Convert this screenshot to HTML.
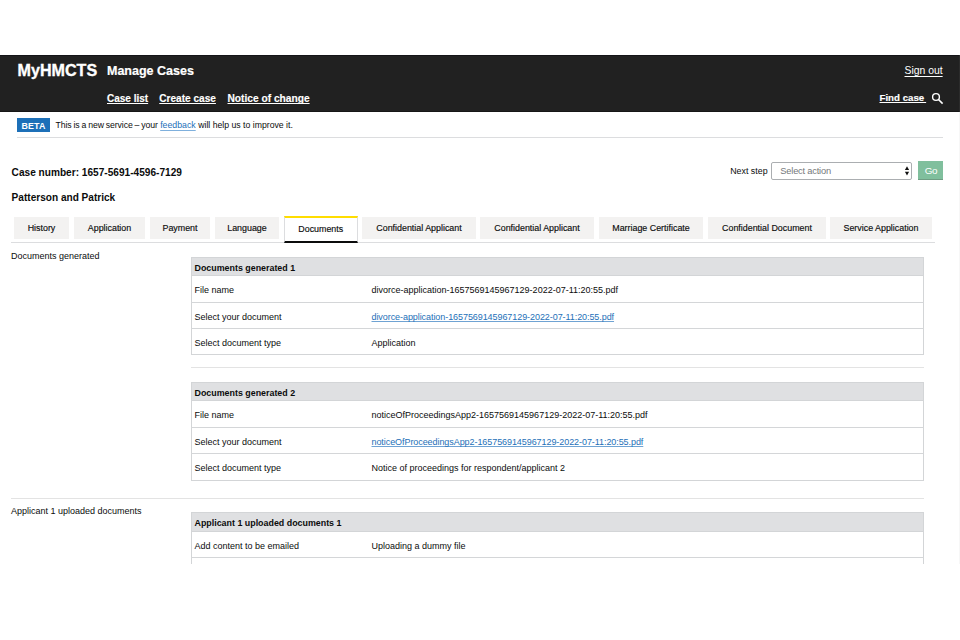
<!DOCTYPE html>
<html><head><meta charset="utf-8"><style>
html,body{margin:0;padding:0;background:#fff;width:960px;height:640px;overflow:hidden;position:relative}
.t{position:absolute;white-space:nowrap;line-height:20px;font-family:"Liberation Sans", sans-serif}
.r{position:absolute}
.tab{text-align:center;color:#0b0c0c}
u{text-decoration:underline;text-underline-offset:1px;text-decoration-skip-ink:none}
.lk{text-decoration-color:#6fa3d3}
</style></head><body>
<div class="r" style="left:0px;top:55px;width:960px;height:57px;background:#212121;"></div>
<div class="r" style="left:0px;top:55px;width:960px;height:1px;background:#141418;"></div>
<div class="r" style="left:0px;top:111px;width:960px;height:1px;background:#161616;"></div>
<div class="r" style="left:959px;top:55px;width:1px;height:57px;background:#2b2b2b;"></div>
<div class="r" style="left:959px;top:112px;width:1px;height:452px;background:#f7f7f7;"></div>
<div class="t" style="left:17.6px;top:60.3px;font-size:16.1px;font-weight:700;color:#fff;-webkit-text-stroke:0.35px #fff">MyHMCTS</div>
<div class="t" style="left:107px;top:61px;font-size:12.5px;font-weight:700;color:#fff;-webkit-text-stroke:0.2px #fff">Manage Cases</div>
<div class="t" style="left:107px;top:89px;font-size:10px;font-weight:700;color:#fff;-webkit-text-stroke:0.15px #fff"><u>Case list</u></div>
<div class="t" style="left:159.25px;top:89px;font-size:10.1px;font-weight:700;color:#fff;-webkit-text-stroke:0.15px #fff"><u>Create case</u></div>
<div class="t" style="left:227.5px;top:89px;font-size:10.2px;font-weight:700;color:#fff;-webkit-text-stroke:0.15px #fff"><u>Notice of change</u></div>
<div class="t" style="left:904.5px;top:61.3px;font-size:10.4px;font-weight:400;color:#fff;"><u style="text-underline-offset:2px">Sign out</u></div>
<div class="t" style="left:879.5px;top:88.4px;font-size:9.7px;font-weight:700;color:#fff;-webkit-text-stroke:0.15px #fff"><u>Find case&#8201;</u></div>
<svg class="r" style="left:930px;top:91px" width="16" height="16" viewBox="0 0 16 16"><circle cx="6" cy="6" r="3.4" fill="none" stroke="#fff" stroke-width="1.4"/><line x1="8.5" y1="8.5" x2="12.6" y2="12.6" stroke="#fff" stroke-width="1.6"/></svg>
<div class="r" style="left:17px;top:118px;width:33px;height:14px;background:#1d70b8;"></div>
<div class="t" style="left:21.5px;top:115.5px;font-size:8.9px;font-weight:700;color:#fff;letter-spacing:0.1px">BETA</div>
<div class="t" style="left:55.5px;top:115px;font-size:8.7px;font-weight:400;color:#0b0c0c;letter-spacing:-0.1px;word-spacing:-0.35px">This is a new service – your</div>
<div class="t" style="left:160.2px;top:115px;font-size:8.75px;font-weight:400;color:#1d70b8;"><u style="text-decoration-color:#7fb0dd;text-underline-offset:1.5px">feedback</u></div>
<div class="t" style="left:198.2px;top:115px;font-size:8.7px;font-weight:400;color:#0b0c0c;">will help us to improve it.</div>
<div class="r" style="left:17px;top:137px;width:926px;height:1px;background:#dcdddf;"></div>
<div class="t" style="left:11.6px;top:162.6px;font-size:10.12px;font-weight:700;color:#0b0c0c;">Case number: 1657-5691-4596-7129</div>
<div class="t" style="left:11.6px;top:188px;font-size:10.08px;font-weight:700;color:#0b0c0c;">Patterson and Patrick</div>
<div class="t" style="left:730.2px;top:160.75px;font-size:8.85px;font-weight:400;color:#0b0c0c;">Next step</div>
<div class="r" style="left:771px;top:162px;width:141px;height:18px;background:#fff;box-sizing:border-box;border:1px solid #abaeb1;border-radius:2px"></div>
<div class="t" style="left:780.3px;top:161px;font-size:9.3px;font-weight:400;color:#75787b;letter-spacing:-0.2px">Select action</div>
<svg class="r" style="left:904px;top:166px" width="6" height="10" viewBox="0 0 6 10"><path d="M3 0.2 L5.1 3.9 H0.9 Z M3 9.4 L5.1 5.7 H0.9 Z" fill="#111"/></svg>
<div class="r" style="left:918px;top:161px;width:25px;height:19px;background:#80bf9d;box-sizing:border-box;border-bottom:1.5px solid #6f9d83"></div>
<div class="t" style="left:924.8px;top:161.4px;font-size:9.9px;font-weight:400;color:#fff;letter-spacing:-0.4px">Go</div>
<div class="r" style="left:11px;top:242px;width:924px;height:1px;background:#dcdddf;"></div>
<div class="r" style="left:14px;top:217px;width:55px;height:22px;background:#f3f2f1;"></div>
<div class="t tab" style="left:14px;top:218px;width:55px;font-size:8.9px;-webkit-text-stroke:0.15px #0b0c0c;">History</div>
<div class="r" style="left:74px;top:217px;width:71px;height:22px;background:#f3f2f1;"></div>
<div class="t tab" style="left:74px;top:218px;width:71px;font-size:8.9px;-webkit-text-stroke:0.15px #0b0c0c;">Application</div>
<div class="r" style="left:150px;top:217px;width:60px;height:22px;background:#f3f2f1;"></div>
<div class="t tab" style="left:150px;top:218px;width:60px;font-size:8.9px;-webkit-text-stroke:0.15px #0b0c0c;">Payment</div>
<div class="r" style="left:215px;top:217px;width:64px;height:22px;background:#f3f2f1;"></div>
<div class="t tab" style="left:215px;top:218px;width:64px;font-size:8.9px;-webkit-text-stroke:0.15px #0b0c0c;">Language</div>
<div class="r" style="left:284px;top:216px;width:73.5px;height:27px;background:#fff;box-sizing:border-box;border-left:1px solid #dcdddf;border-right:1px solid #dcdddf;border-top:2px solid #ffdd00;border-bottom:2px solid #0b0c0c"></div>
<div class="t tab" style="left:284px;top:219px;width:73.5px;font-size:8.9px;-webkit-text-stroke:0.15px #0b0c0c;">Documents</div>
<div class="r" style="left:362px;top:217px;width:114px;height:22px;background:#f3f2f1;"></div>
<div class="t tab" style="left:362px;top:218px;width:114px;font-size:8.9px;-webkit-text-stroke:0.15px #0b0c0c;">Confidential Applicant</div>
<div class="r" style="left:480px;top:217px;width:114px;height:22px;background:#f3f2f1;"></div>
<div class="t tab" style="left:480px;top:218px;width:114px;font-size:8.9px;-webkit-text-stroke:0.15px #0b0c0c;">Confidential Applicant</div>
<div class="r" style="left:599px;top:217px;width:104px;height:22px;background:#f3f2f1;"></div>
<div class="t tab" style="left:599px;top:218px;width:104px;font-size:8.9px;-webkit-text-stroke:0.15px #0b0c0c;">Marriage Certificate</div>
<div class="r" style="left:708px;top:217px;width:118px;height:22px;background:#f3f2f1;"></div>
<div class="t tab" style="left:708px;top:218px;width:118px;font-size:8.9px;-webkit-text-stroke:0.15px #0b0c0c;">Confidential Document</div>
<div class="r" style="left:830px;top:217px;width:102px;height:22px;background:#f3f2f1;"></div>
<div class="t tab" style="left:830px;top:218px;width:102px;font-size:8.9px;-webkit-text-stroke:0.15px #0b0c0c;">Service Application</div>
<div class="t" style="left:11px;top:246px;font-size:9px;font-weight:400;color:#0b0c0c;">Documents generated</div>
<div class="r" style="left:191px;top:257px;width:733px;height:98px;background:#fff;box-sizing:border-box;border:1px solid #d3d5d7;"></div>
<div class="r" style="left:191px;top:257px;width:733px;height:19px;background:#dfe0e2;box-sizing:border-box;border:1px solid #d3d5d7"></div>
<div class="r" style="left:191px;top:302px;width:733px;height:1px;background:#d4d6d8;"></div>
<div class="r" style="left:191px;top:328px;width:733px;height:1px;background:#d4d6d8;"></div>
<div class="t" style="left:194.5px;top:258.2px;font-size:8.9px;font-weight:700;color:#0b0c0c;">Documents generated 1</div>
<div class="t" style="left:194.5px;top:280.1px;font-size:9px;font-weight:400;color:#0b0c0c;">File name</div>
<div class="t" style="left:371.5px;top:280.1px;font-size:9px;font-weight:400;color:#0b0c0c;">divorce-application-1657569145967129-2022-07-11:20:55.pdf</div>
<div class="t" style="left:194.5px;top:307px;font-size:9px;font-weight:400;color:#0b0c0c;">Select your document</div>
<div class="t" style="left:371.5px;top:307px;font-size:9px;font-weight:400;color:#1d70b8;letter-spacing:-0.07px"><u class="lk">divorce-application-1657569145967129-2022-07-11:20:55.pdf</u></div>
<div class="t" style="left:194.5px;top:333.25px;font-size:9px;font-weight:400;color:#0b0c0c;">Select document type</div>
<div class="t" style="left:371.5px;top:333.25px;font-size:9px;font-weight:400;color:#0b0c0c;">Application</div>
<div class="r" style="left:191px;top:367px;width:733px;height:1px;background:#e3e3e3;"></div>
<div class="r" style="left:191px;top:382px;width:733px;height:98.5px;background:#fff;box-sizing:border-box;border:1px solid #d3d5d7;"></div>
<div class="r" style="left:191px;top:382px;width:733px;height:19px;background:#dfe0e2;box-sizing:border-box;border:1px solid #d3d5d7"></div>
<div class="r" style="left:191px;top:427px;width:733px;height:1px;background:#d4d6d8;"></div>
<div class="r" style="left:191px;top:453px;width:733px;height:1px;background:#d4d6d8;"></div>
<div class="t" style="left:194.5px;top:383.2px;font-size:8.9px;font-weight:700;color:#0b0c0c;">Documents generated 2</div>
<div class="t" style="left:194.5px;top:405px;font-size:9px;font-weight:400;color:#0b0c0c;">File name</div>
<div class="t" style="left:371.5px;top:405px;font-size:9px;font-weight:400;color:#0b0c0c;">noticeOfProceedingsApp2-1657569145967129-2022-07-11:20:55.pdf</div>
<div class="t" style="left:194.5px;top:432px;font-size:9px;font-weight:400;color:#0b0c0c;">Select your document</div>
<div class="t" style="left:371.5px;top:432px;font-size:9px;font-weight:400;color:#1d70b8;letter-spacing:-0.07px"><u class="lk">noticeOfProceedingsApp2-1657569145967129-2022-07-11:20:55.pdf</u></div>
<div class="t" style="left:194.5px;top:458.25px;font-size:9px;font-weight:400;color:#0b0c0c;">Select document type</div>
<div class="t" style="left:371.5px;top:458.25px;font-size:9px;font-weight:400;color:#0b0c0c;">Notice of proceedings for respondent/applicant 2</div>
<div class="r" style="left:11px;top:498px;width:913px;height:1px;background:#e3e3e3;"></div>
<div class="t" style="left:11px;top:501px;font-size:9px;font-weight:400;color:#0b0c0c;">Applicant 1 uploaded documents</div>
<div class="r" style="left:191px;top:512px;width:733px;height:52px;background:#fff;box-sizing:border-box;border:1px solid #d3d5d7;border-bottom:none;"></div>
<div class="r" style="left:191px;top:512px;width:733px;height:20px;background:#dfe0e2;box-sizing:border-box;border:1px solid #d3d5d7"></div>
<div class="r" style="left:191px;top:557px;width:733px;height:1px;background:#d4d6d8;"></div>
<div class="t" style="left:194.5px;top:513px;font-size:8.9px;font-weight:700;color:#0b0c0c;">Applicant 1 uploaded documents 1</div>
<div class="t" style="left:194.5px;top:535.75px;font-size:9px;font-weight:400;color:#0b0c0c;">Add content to be emailed</div>
<div class="t" style="left:371.5px;top:535.75px;font-size:9px;font-weight:400;color:#0b0c0c;">Uploading a dummy file</div>
</body></html>
